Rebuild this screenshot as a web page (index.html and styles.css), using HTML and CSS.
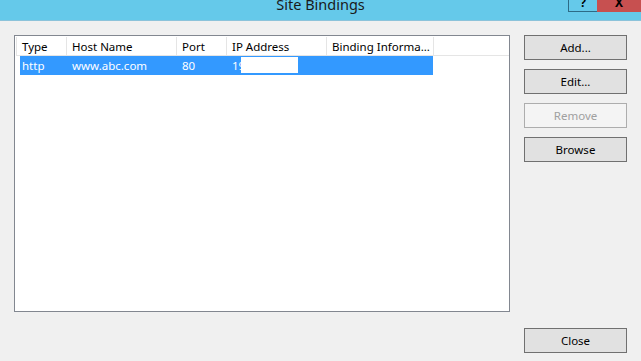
FILE: index.html
```html
<!DOCTYPE html>
<html>
<head>
<meta charset="utf-8">
<link rel="stylesheet" href="styles.css">
</head>
<body>
<div class="window">
  <div class="titlebar">
    <div class="spacer"></div>
    <div class="title">Site Bindings</div>
    <div class="controls">
      <div class="ctl help">?</div>
      <div class="ctl close">X</div>
    </div>
  </div>
  <div class="content">
    <div class="list">
      <div class="header">
        <div class="hcell c1">Type</div>
        <div class="hcell c2">Host Name</div>
        <div class="hcell c3">Port</div>
        <div class="hcell c4">IP Address</div>
        <div class="hcell c5">Binding Informa...</div>
        <div class="hfill"></div>
      </div>
      <div class="row selected">
        <div class="cell c1 first">http</div>
        <div class="cell c2">www.abc.com</div>
        <div class="cell c3">80</div>
        <div class="cell c4">19<span class="mask"></span></div>
        <div class="cell c5"></div>
      </div>
    </div>
    <div class="actions">
      <button class="btn">Add...</button>
      <button class="btn">Edit...</button>
      <button class="btn disabled">Remove</button>
      <button class="btn">Browse</button>
    </div>
    <div class="footer">
      <button class="btn">Close</button>
    </div>
  </div>
</div>
</body>
</html>
```
FILE: styles.css
```css
* { box-sizing: border-box; }
html, body { margin: 0; padding: 0; }
body {
  width: 641px;
  height: 361px;
  overflow: hidden;
  background: #f0f0f0;
  font-family: "Noto Sans", "Open Sans", sans-serif;
  font-size: 11.5px;
  color: #000;
}
.window { width: 641px; height: 361px; }
.titlebar {
  height: 21px;
  background: #65c9ea;
  border-bottom: 1px solid #8cc3da;
  display: grid;
  grid-template-columns: 1fr auto 1fr;
  align-items: start;
  overflow: hidden;
}
.title {
  font-size: 14.5px;
  line-height: 20px;
  margin-top: -6px;
  color: #1a1a1a;
}
.controls {
  justify-self: end;
  display: flex;
}
.ctl {
  height: 12px;
  line-height: 12px;
  text-align: center;
  font-weight: bold;
  font-size: 12px;
  overflow: hidden;
}
.help {
  width: 29px;
  border: 1px solid #2d6b86;
  border-top: none;
  border-right: none;
  line-height: 6px;
  color: #000;
}
.close {
  width: 44px;
  background: #c75050;
  line-height: 5px;
  color: #000;
}
.content {
  padding: 14px 14px 0 14px;
  display: grid;
  grid-template-columns: 496px 103px;
  grid-template-rows: 277px auto;
  column-gap: 14px;
}
.list {
  grid-row: 1;
  grid-column: 1;
  background: #fff;
  border: 1px solid #828790;
  padding: 1px 0 0 1px;
}
.header {
  display: flex;
  height: 19px;
  border-bottom: 1px solid #e5e5e5;
}
.hcell {
  padding-top: 1px;
  line-height: 17px;
  padding-left: 5px;
  border-right: 1px solid #e5e5e5;
  white-space: nowrap;
  overflow: hidden;
  flex: none;
}
.hcell.c1 { border-left: 1px solid #e5e5e5; }
.hfill { flex: 1; }
.c1 { width: 51px; }
.c2 { width: 110px; }
.c3 { width: 50px; }
.c4 { width: 100px; }
.c5 { width: 107px; }
.row {
  display: flex;
  height: 19px;
}
.cell {
  line-height: 19px;
  padding-left: 6px;
  white-space: nowrap;
  flex: none;
  position: relative;
}
.selected .cell { background: #3399ff; color: #fff; }
.cell.first {
  margin-left: 4px;
  width: 46px;
  padding-left: 2px;
}
.mask {
  position: absolute;
  left: 15px;
  top: 1px;
  width: 57px;
  height: 16px;
  background: #fff;
}
.actions {
  grid-row: 1;
  grid-column: 2;
  display: flex;
  flex-direction: column;
  gap: 9px;
}
.btn {
  width: 103px;
  height: 25px;
  background: #e1e1e1;
  border: 1px solid #707070;
  font-family: inherit;
  font-size: 11.5px;
  color: #000;
  padding: 0;
  margin: 0;
}
.btn.disabled {
  background: #f4f4f4;
  border-color: #adadad;
  color: #a0a0a0;
}
.footer {
  grid-row: 2;
  grid-column: 2;
  padding-top: 16px;
}
```
